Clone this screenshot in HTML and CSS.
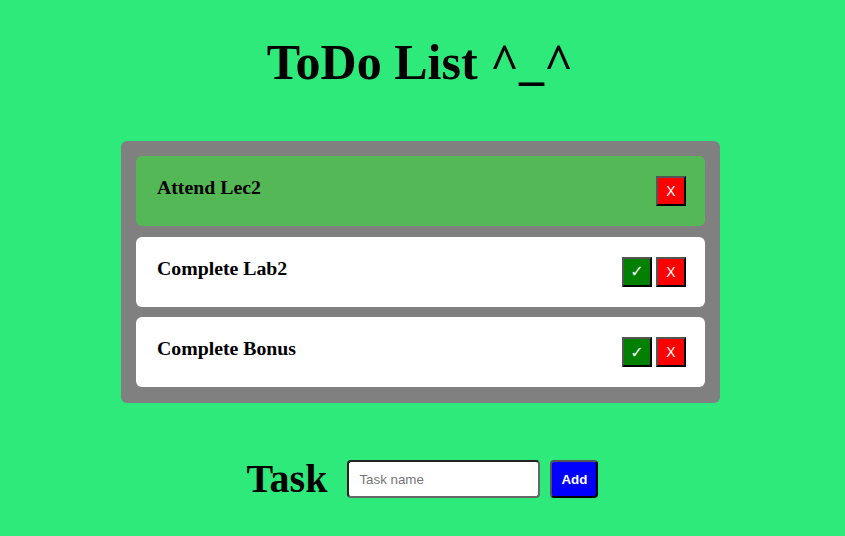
FILE: index.html
```html
<!DOCTYPE html>
<html>
<head>
<meta charset="utf-8">
<link rel="stylesheet" href="styles.css">
</head>
<body>
<h1 class="title">ToDo List ^_^</h1>
<div class="list">
  <div class="item done">
    <h3 class="item-text">Attend Lec2</h3>
    <div class="actions">
      <button class="btn btn-del">X</button>
    </div>
  </div>
  <div class="item">
    <h3 class="item-text">Complete Lab2</h3>
    <div class="actions">
      <button class="btn btn-ok">✓</button>
      <button class="btn btn-del">X</button>
    </div>
  </div>
  <div class="item">
    <h3 class="item-text">Complete Bonus</h3>
    <div class="actions">
      <button class="btn btn-ok">✓</button>
      <button class="btn btn-del">X</button>
    </div>
  </div>
</div>
<div class="add-row">
  <h2 class="task-label">Task</h2>
  <input class="task-input" type="text" placeholder="Task name">
  <button class="add-btn">Add</button>
</div>
</body>
</html>
```
FILE: styles.css
```css
html, body {
  margin: 0;
  padding: 0;
}
body {
  background: #2eea7b;
  font-family: "Liberation Serif", "Times New Roman", serif;
  color: #000;
  height: 536px;
  overflow: hidden;
}
.title {
  margin: 35px 0 0;
  padding-right: 5px;
  font-size: 50px;
  font-weight: bold;
  line-height: 54px;
  text-align: center;
}
.list {
  width: 569px;
  margin: 52px 0 0 121px;
  padding: 15px;
  padding-bottom: 16px;
  background: #808080;
  border-radius: 6px;
  display: flex;
  flex-direction: column;
  gap: 10.5px;
}
.item {
  background: #fff;
  border-radius: 6px;
  height: 70px;
  box-sizing: border-box;
  padding: 20px 19px 20px 21px;
  display: flex;
  justify-content: space-between;
  align-items: flex-start;
}
.item.done {
  background: #53b855;
}
.item-text {
  margin: 0;
  font-size: 19.8px;
  font-weight: bold;
  line-height: 22px;
}
.actions {
  display: flex;
  gap: 4px;
}
.btn {
  width: 30px;
  height: 30px;
  padding: 0;
  border: 2px solid;
  border-color: #555 #000 #000 #555;
  color: #fff;
  font-family: "Liberation Sans", Arial, sans-serif;
  font-size: 14px;
  box-sizing: border-box;
}
.btn-del {
  background: #ff0000;
}
.btn-ok {
  background: #008000;
  font-family: "DejaVu Sans", sans-serif;
  font-size: 16px;
}
.add-row {
  margin-top: 53px;
  display: flex;
  justify-content: center;
  align-items: center;
}
.task-label {
  margin: 0 20px 0 0;
  font-size: 40px;
  font-weight: bold;
  line-height: 46px;
}
.task-input {
  width: 193px;
  height: 38px;
  box-sizing: border-box;
  border: 2px solid;
  border-color: #222 #666 #666 #222;
  border-radius: 4px;
  padding: 0 10px;
  font-family: "Liberation Sans", Arial, sans-serif;
  font-size: 13.33px;
  background: #fff;
  margin-right: 10px;
}
.task-input::placeholder {
  color: #757575;
}
.add-btn {
  width: 48px;
  height: 38px;
  box-sizing: border-box;
  background: #0000ff;
  color: #fff;
  border: 2px solid;
  border-color: #555 #000 #000 #555;
  border-radius: 4px;
  font-family: "Liberation Sans", Arial, sans-serif;
  font-size: 13.33px;
  font-weight: bold;
  padding: 0;
}
```
